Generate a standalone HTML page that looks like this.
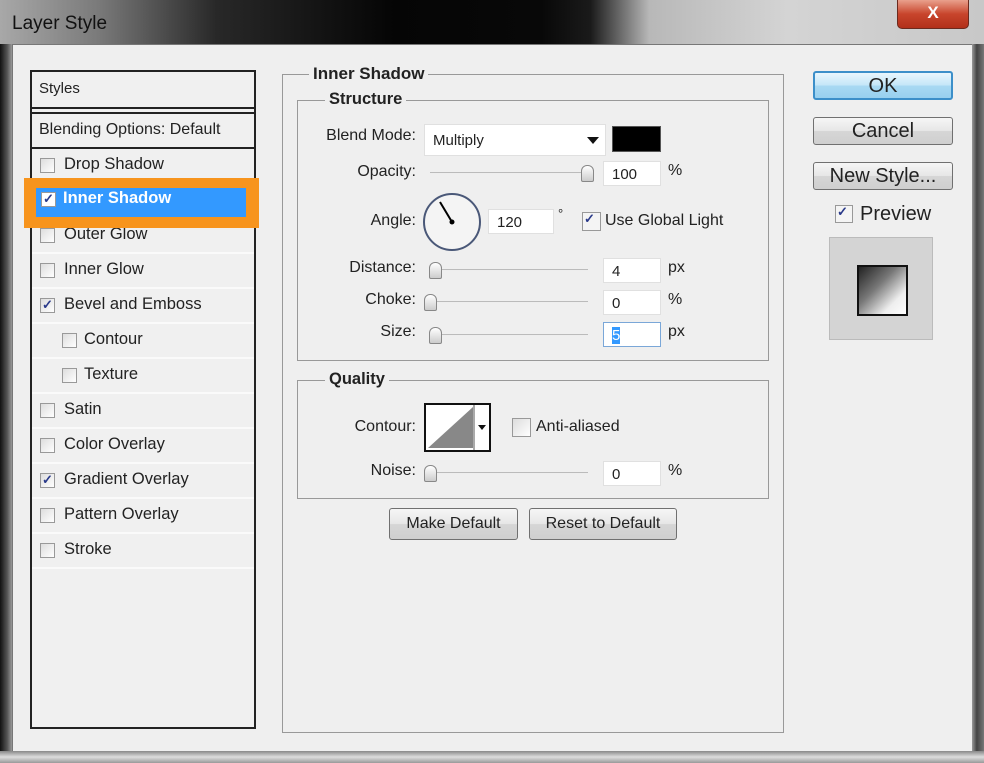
<!DOCTYPE html>
<html><head><style>
*{margin:0;padding:0;box-sizing:border-box}
body{width:984px;height:763px;overflow:hidden;background:#d8d8d8;font-family:"Liberation Sans",Tahoma,sans-serif;font-size:16px;color:#222;position:relative}
.a{position:absolute}
.title{left:0;top:0;width:984px;height:48px;background:linear-gradient(90deg,#a8a8a8 0%,#7a7a7a 10%,#282828 22%,#050505 40%,#080808 55%,#1a1a1a 60%,#b8b8b8 66%,#d4d4d4 80%,#c8c8c8 100%)}
.client{left:12px;top:44px;width:962px;height:708px;background:#efefef;border:1px solid #777}
.lp{left:30px;top:70px;width:226px;height:659px;border:2px solid #222;background:#f0f0f0}
.row{position:absolute;left:0;width:222px;height:35px;border-bottom:2px solid #fafafa}
.row span{position:absolute;left:32px;top:6px;font-size:16.5px}
.cb{position:absolute;width:15px;height:15px;border:1px solid #999;background:linear-gradient(135deg,#ddd,#fff)}
.row .cb{left:8px;top:9px}
.chk::after{content:"✓";position:absolute;left:1px;top:-2px;font-size:13px;color:#2a3a8a;font-weight:bold}
.grp{border:1px solid #999}
.lbl{position:absolute;background:#efefef;font-weight:bold;padding:0 4px;font-size:16.5px}
.r{position:absolute;text-align:right;font-size:16px}
.inp{position:absolute;background:#fff;border:1px solid #e0e0e0;font-size:15px;padding:4px 0 0 8px}
.sl{position:absolute;height:2px;background:#bbb;border-bottom:1px solid #eee}
.th{position:absolute;width:13px;height:17px;border:1px solid #888;border-radius:6px 6px 2px 2px;background:linear-gradient(#fff,#ccc)}
.btn{position:absolute;border:1px solid #707070;border-radius:3px;background:linear-gradient(#f6f6f6 0%,#e6e6e6 50%,#d6d6d6 51%,#cfcfcf 100%);text-align:center;font-size:20px;line-height:26px}
</style></head><body>
<div class="a title"></div>
<div class="a" style="left:12px;top:13px;color:#111;font-size:19px">Layer Style</div>
<div class="a" style="left:897px;top:0;width:72px;height:29px;border:1px solid #6b2a1e;border-top:0;border-radius:0 0 5px 5px;background:linear-gradient(#e9a08c,#c8452c 50%,#b2301a);color:#fff;font-weight:bold;text-align:center;font-size:17px;line-height:26px">X</div>
<div class="a client"></div>
<div class="a" style="left:972px;top:44px;width:12px;height:719px;background:linear-gradient(90deg,#9a9a9a,#444 40%,#777)"></div>
<div class="a" style="left:0;top:44px;width:12px;height:719px;background:linear-gradient(90deg,#111,#555 60%,#999)"></div>
<div class="a" style="left:0;top:751px;width:984px;height:12px;background:linear-gradient(#888,#ddd 50%,#999)"></div>

<div class="a lp">
 <div class="row" style="top:0;height:37px;border-bottom:2px solid #222"><span style="left:7px;top:8px;font-size:15px">Styles</span></div>
 <div class="row" style="top:40px;height:37px;border-top:2px solid #222;border-bottom:2px solid #222"><span style="left:7px;top:7px;font-size:16px">Blending Options: Default</span></div>
 <div class="row" style="top:77px"><div class="cb"></div><span>Drop Shadow</span></div>
 <div class="row" style="top:112px"></div>
 <div class="row" style="top:147px"><div class="cb"></div><span>Outer Glow</span></div>
 <div class="row" style="top:182px"><div class="cb"></div><span>Inner Glow</span></div>
 <div class="row" style="top:217px"><div class="cb chk"></div><span>Bevel and Emboss</span></div>
 <div class="row" style="top:252px"><div class="cb" style="left:30px"></div><span style="left:52px">Contour</span></div>
 <div class="row" style="top:287px"><div class="cb" style="left:30px"></div><span style="left:52px">Texture</span></div>
 <div class="row" style="top:322px"><div class="cb"></div><span>Satin</span></div>
 <div class="row" style="top:357px"><div class="cb"></div><span>Color Overlay</span></div>
 <div class="row" style="top:392px"><div class="cb chk"></div><span>Gradient Overlay</span></div>
 <div class="row" style="top:427px"><div class="cb"></div><span>Pattern Overlay</span></div>
 <div class="row" style="top:462px"><div class="cb"></div><span>Stroke</span></div>
</div>
<div class="a" style="left:24px;top:178px;width:235px;height:50px;background:#f7941d"></div>
<div class="a" style="left:36px;top:188px;width:210px;height:29px;background:#3399ff"></div>
<div class="a cb chk" style="left:41px;top:192px;background:#fff"></div>
<div class="a" style="left:63px;top:189px;color:#fff;font-weight:bold;font-size:16.5px">Inner Shadow</div>

<div class="a grp" style="left:282px;top:74px;width:502px;height:659px"></div>
<div class="lbl" style="left:309px;top:64px;font-size:17px">Inner Shadow</div>
<div class="a grp" style="left:297px;top:100px;width:472px;height:261px"></div>
<div class="lbl" style="left:325px;top:90px">Structure</div>

<div class="r" style="left:300px;width:116px;top:127px">Blend Mode:</div>
<div class="inp" style="left:424px;top:124px;width:182px;height:32px;padding-top:7px">Multiply</div>
<div class="a" style="left:587px;top:137px;border:6px solid transparent;border-top:7px solid #111"></div>
<div class="a" style="left:612px;top:126px;width:49px;height:26px;background:#000;border:1px solid #555"></div>

<div class="r" style="left:300px;width:116px;top:163px">Opacity:</div>
<div class="sl" style="left:430px;top:172px;width:160px"></div>
<div class="th" style="left:581px;top:165px"></div>
<div class="inp" style="left:603px;top:161px;width:58px;height:25px">100</div>
<div class="a" style="left:668px;top:162px">%</div>

<div class="r" style="left:300px;width:116px;top:212px">Angle:</div>
<div class="a" style="left:423px;top:193px;width:58px;height:58px;border-radius:50%;border:2px solid #4a5878;background:#f4f4f4"></div>
<svg class="a" style="left:423px;top:193px" width="58" height="58"><line x1="29" y1="29" x2="17" y2="9" stroke="#000" stroke-width="2"/><circle cx="29" cy="29" r="2.5"/></svg>
<div class="inp" style="left:488px;top:209px;width:66px;height:25px">120</div>
<div class="a" style="left:558px;top:206px;font-size:13px">°</div>
<div class="a cb chk" style="left:582px;top:212px;width:19px;height:19px;background:#f4f4f4"></div>
<div class="a" style="left:605px;top:212px">Use Global Light</div>

<div class="r" style="left:300px;width:116px;top:259px">Distance:</div>
<div class="sl" style="left:430px;top:269px;width:158px"></div>
<div class="th" style="left:429px;top:262px"></div>
<div class="inp" style="left:603px;top:258px;width:58px;height:25px">4</div>
<div class="a" style="left:668px;top:259px">px</div>

<div class="r" style="left:300px;width:116px;top:291px">Choke:</div>
<div class="sl" style="left:425px;top:301px;width:163px"></div>
<div class="th" style="left:424px;top:294px"></div>
<div class="inp" style="left:603px;top:290px;width:58px;height:25px">0</div>
<div class="a" style="left:668px;top:291px">%</div>

<div class="r" style="left:300px;width:116px;top:323px">Size:</div>
<div class="sl" style="left:430px;top:334px;width:158px"></div>
<div class="th" style="left:429px;top:327px"></div>
<div class="inp" style="left:603px;top:322px;width:58px;height:25px;border:1px solid #7aa7d8"><span style="background:#3399ff;color:#fff">5</span></div>
<div class="a" style="left:668px;top:323px">px</div>

<div class="a grp" style="left:297px;top:380px;width:472px;height:119px"></div>
<div class="lbl" style="left:325px;top:370px">Quality</div>
<div class="r" style="left:300px;width:116px;top:418px">Contour:</div>
<div class="a" style="left:424px;top:403px;width:67px;height:49px;border:2px solid #111;background:#fff"></div>
<svg class="a" style="left:426px;top:405px" width="63" height="45"><polygon points="2,43 47,2 47,43" fill="#888"/><line x1="48" y1="0" x2="48" y2="45" stroke="#555"/><polygon points="52,20 60,20 56,25" fill="#111"/></svg>
<div class="a cb" style="left:512px;top:418px;width:19px;height:19px"></div>
<div class="a" style="left:536px;top:418px">Anti-aliased</div>
<div class="r" style="left:300px;width:116px;top:462px">Noise:</div>
<div class="sl" style="left:425px;top:472px;width:163px"></div>
<div class="th" style="left:424px;top:465px"></div>
<div class="inp" style="left:603px;top:461px;width:58px;height:25px">0</div>
<div class="a" style="left:668px;top:462px">%</div>

<div class="btn" style="left:389px;top:508px;width:129px;height:32px;font-size:16px;line-height:30px">Make Default</div>
<div class="btn" style="left:529px;top:508px;width:148px;height:32px;font-size:16px;line-height:30px">Reset to Default</div>

<div class="btn" style="left:813px;top:71px;width:140px;height:29px;border:2px solid #3c8fc9;background:linear-gradient(#e8f6fd,#c4e6f8 50%,#a9d9f3 51%,#98d0ef)">OK</div>
<div class="btn" style="left:813px;top:117px;width:140px;height:28px">Cancel</div>
<div class="btn" style="left:813px;top:162px;width:140px;height:28px">New Style...</div>
<div class="a cb chk" style="left:835px;top:205px;width:18px;height:18px;background:#f4f4f4"></div>
<div class="a" style="left:860px;top:203px;font-size:20px">Preview</div>
<div class="a" style="left:829px;top:237px;width:104px;height:103px;background:#d4d4d4;border:1px solid #bbb"></div>
<div class="a" style="left:857px;top:265px;width:51px;height:51px;border:2px solid #111;background:linear-gradient(135deg,#222,#777 40%,#eee 75%,#fff)"></div>
</body></html>
